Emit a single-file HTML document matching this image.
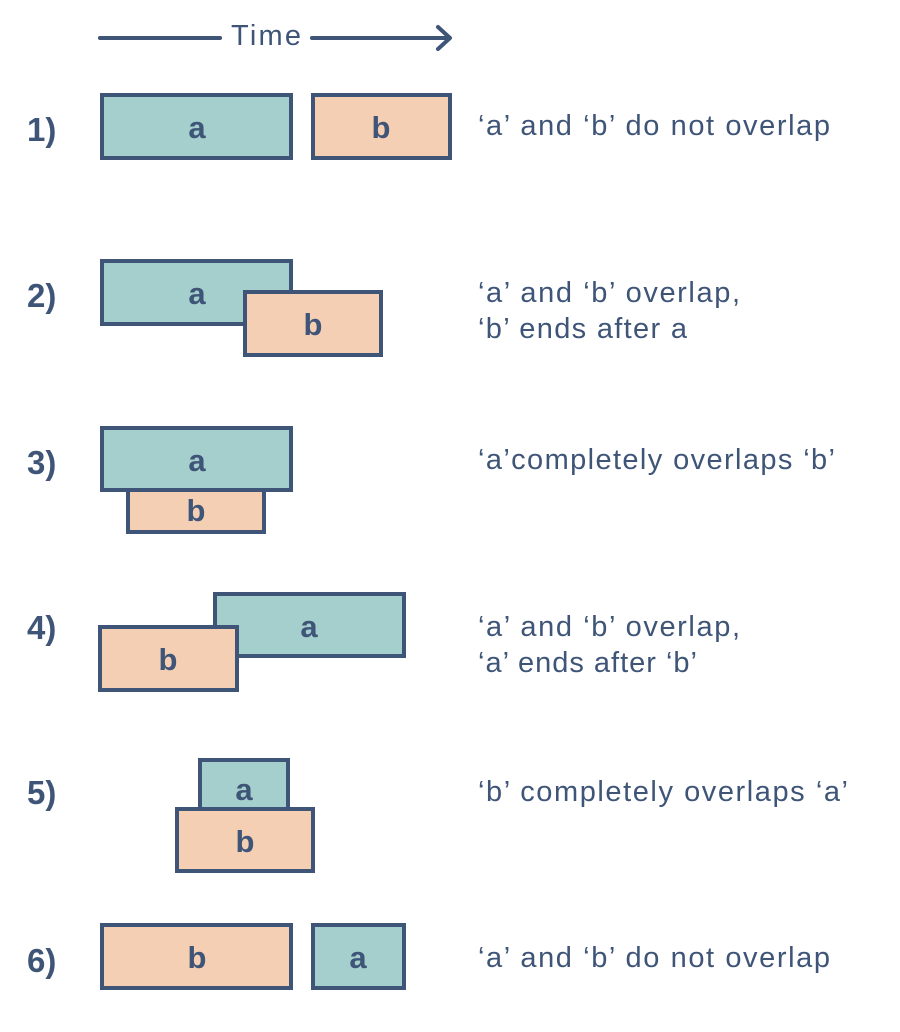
<!DOCTYPE html>
<html><head><meta charset="utf-8"><style>
html,body{margin:0;padding:0;background:#fff;}
svg{display:block}
text{font-family:"Liberation Sans",sans-serif;fill:#3f5578}
.l{font-weight:bold;font-size:33px}
.d{font-size:29px}
.c{font-weight:bold;font-size:31px;text-anchor:middle}
.a{fill:#a5cfcc;stroke:#3f5578;stroke-width:4}
.b{fill:#f5cfb3;stroke:#3f5578;stroke-width:4}
</style></head><body>
<svg width="900" height="1032" viewBox="0 0 900 1032">
<line x1="100" y1="38" x2="220" y2="38" stroke="#3f5578" stroke-width="4" stroke-linecap="round"/>
<line x1="312" y1="38" x2="449" y2="38" stroke="#3f5578" stroke-width="4" stroke-linecap="round"/>
<path d="M438 27 L450 38 L438 49" fill="none" stroke="#3f5578" stroke-width="4" stroke-linecap="round" stroke-linejoin="round"/>
<text x="231" y="45" font-size="29" textLength="70">Time</text>

<text class="l" x="27" y="141">1)</text>
<rect class="a" x="102" y="95" width="189" height="63"/><text class="c" x="197" y="138">a</text>
<rect class="b" x="313" y="95" width="137" height="63"/><text class="c" x="381" y="138">b</text>
<text class="d" x="478" y="135" textLength="352">‘a’ and ‘b’ do not overlap</text>

<text class="l" x="27" y="307">2)</text>
<rect class="a" x="102" y="261" width="189" height="63"/><text class="c" x="197" y="304">a</text>
<rect class="b" x="245" y="292" width="136" height="63"/><text class="c" x="313" y="335">b</text>
<text class="d" x="478" y="302" textLength="262">‘a’ and ‘b’ overlap,</text>
<text class="d" x="478" y="338" textLength="209">‘b’ ends after a</text>

<text class="l" x="27" y="474">3)</text>
<rect class="b" x="128" y="488" width="136" height="44"/><text class="c" x="196" y="521">b</text>
<rect class="a" x="102" y="428" width="189" height="62"/><text class="c" x="197" y="471">a</text>
<text class="d" x="478" y="469" textLength="357">‘a’completely overlaps ‘b’</text>

<text class="l" x="27" y="639">4)</text>
<rect class="a" x="215" y="594" width="189" height="62"/><text class="c" x="309" y="637">a</text>
<rect class="b" x="100" y="627" width="137" height="63"/><text class="c" x="168" y="670">b</text>
<text class="d" x="478" y="636" textLength="262">‘a’ and ‘b’ overlap,</text>
<text class="d" x="478" y="672" textLength="219">‘a’ ends after ‘b’</text>

<text class="l" x="27" y="804">5)</text>
<rect class="a" x="200" y="760" width="88" height="52"/><text class="c" x="244" y="800">a</text>
<rect class="b" x="177" y="809" width="136" height="62"/><text class="c" x="245" y="852">b</text>
<text class="d" x="478" y="801" textLength="370">‘b’ completely overlaps ‘a’</text>

<text class="l" x="27" y="972">6)</text>
<rect class="b" x="102" y="925" width="189" height="63"/><text class="c" x="197" y="968">b</text>
<rect class="a" x="313" y="925" width="91" height="63"/><text class="c" x="358" y="968">a</text>
<text class="d" x="478" y="967" textLength="352">‘a’ and ‘b’ do not overlap</text>
</svg>
</body></html>
